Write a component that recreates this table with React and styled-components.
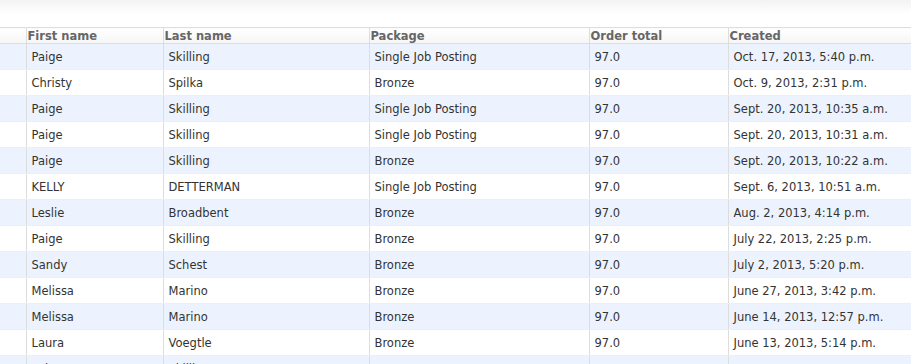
import React from 'react';
import styled, { createGlobalStyle } from 'styled-components';

const GlobalStyle = createGlobalStyle`
  html, body {
    margin: 0;
    padding: 0;
    background: #fff;
  }
  body {
    font-family: "DejaVu Sans", Verdana, sans-serif;
    font-size: 11.5px;
    color: #333;
  }
`;

const Page = styled.div`
  width: 911px;
  height: 364px;
  overflow: hidden;
`;

const TopShade = styled.div`
  height: 27px;
  background: linear-gradient(to bottom, #f3f3f3 0px, #ffffff 14px);
`;

const Table = styled.table`
  border-collapse: collapse;
  table-layout: fixed;
  width: 960px;
`;

const Head = styled.th`
  text-align: left;
  font-weight: bold;
  color: #666;
  font-size: 11.5px;
  padding: 1px 0 0 1px;
  height: 14px;
  line-height: 14px;
  border-top: 1px solid #ddd;
  border-bottom: 1px solid #ddd;
  border-left: 1px solid #ddd;
  background: linear-gradient(to bottom, #ffffff, #f6f6f6);
  white-space: nowrap;
  overflow: hidden;

  &:first-child {
    border-left: none;
  }
`;

const Row = styled.tr`
  background: ${p => (p.$alt ? '#edf3fe' : '#ffffff')};
`;

const Cell = styled.td`
  height: 25px;
  padding: 0 0 0 5px;
  border-left: 1px solid #ddd;
  border-bottom: 1px solid #eee;
  white-space: nowrap;
  overflow: hidden;
  color: #333;

  &:first-child {
    border-left: none;
  }
`;

const columns = [
  { label: '', width: 26 },
  { label: 'First name', width: 137 },
  { label: 'Last name', width: 206 },
  { label: 'Package', width: 220 },
  { label: 'Order total', width: 139 },
  { label: 'Created', width: 232 },
];

const orders = [
  ['Paige', 'Skilling', 'Single Job Posting', '97.0', 'Oct. 17, 2013, 5:40 p.m.'],
  ['Christy', 'Spilka', 'Bronze', '97.0', 'Oct. 9, 2013, 2:31 p.m.'],
  ['Paige', 'Skilling', 'Single Job Posting', '97.0', 'Sept. 20, 2013, 10:35 a.m.'],
  ['Paige', 'Skilling', 'Single Job Posting', '97.0', 'Sept. 20, 2013, 10:31 a.m.'],
  ['Paige', 'Skilling', 'Bronze', '97.0', 'Sept. 20, 2013, 10:22 a.m.'],
  ['KELLY', 'DETTERMAN', 'Single Job Posting', '97.0', 'Sept. 6, 2013, 10:51 a.m.'],
  ['Leslie', 'Broadbent', 'Bronze', '97.0', 'Aug. 2, 2013, 4:14 p.m.'],
  ['Paige', 'Skilling', 'Bronze', '97.0', 'July 22, 2013, 2:25 p.m.'],
  ['Sandy', 'Schest', 'Bronze', '97.0', 'July 2, 2013, 5:20 p.m.'],
  ['Melissa', 'Marino', 'Bronze', '97.0', 'June 27, 2013, 3:42 p.m.'],
  ['Melissa', 'Marino', 'Bronze', '97.0', 'June 14, 2013, 12:57 p.m.'],
  ['Laura', 'Voegtle', 'Bronze', '97.0', 'June 13, 2013, 5:14 p.m.'],
  ['Paige', 'Skilling', 'Bronze', '97.0', 'June 3, 2013, 1:10 p.m.'],
];

const App = () => {
  return (
    <Page>
      <GlobalStyle />
      <TopShade />
      <Table>
        <colgroup>
          {columns.map((c, i) => (
            <col key={i} style={{ width: c.width }} />
          ))}
        </colgroup>
        <thead>
          <tr>
            {columns.map((c, i) => (
              <Head key={i}>{c.label}</Head>
            ))}
          </tr>
        </thead>
        <tbody>
          {orders.map((o, i) => (
            <Row key={i} $alt={i % 2 === 0}>
              <Cell />
              {o.map((v, j) => (
                <Cell key={j}>{v}</Cell>
              ))}
            </Row>
          ))}
        </tbody>
      </Table>
    </Page>
  );
};

export default App;
